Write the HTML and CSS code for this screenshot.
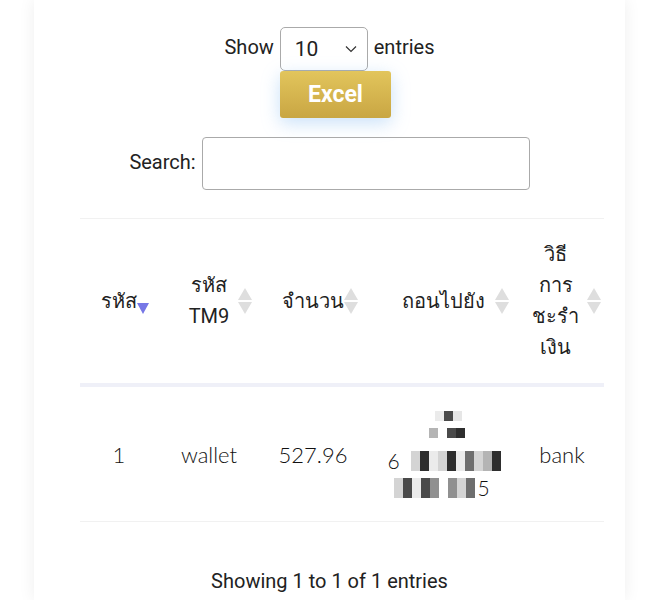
FILE: index.html
```html
<!DOCTYPE html>
<html lang="th">

<head>
    <meta charset="utf-8">
    <meta name="viewport" content="width=device-width, initial-scale=1.0">
    <title>ประวัติการถอน</title>

    <link rel="stylesheet" href="styles.css">
</head>

<body>

    <main class="card">
        <div class="dt-length">
            <label>Show
                <span class="select">10
                    <svg class="chev" width="12" height="8" viewBox="0 0 12 8"><path d="M1 1.5 L6 6.5 L11 1.5" fill="none" stroke="#333" stroke-width="1.2"/></svg>
                </span>
                entries</label>
        </div>
        <div class="dt-buttons">
            <button class="btn-excel">Excel</button>
        </div>
        <div class="dt-search">
            <label>Search: <span class="search-box"></span></label>
        </div>

        <div class="table-wrap">
            <table class="withdraw">
                <thead>
                    <tr>
                        <th class="c1"><span class="th-in">รหัส<i class="sort sort-desc"></i></span></th>
                        <th class="c2"><span class="th-in">รหัส<br>TM9<i class="sort gap9"></i></span></th>
                        <th class="c3"><span class="th-in">จำนวน<i class="sort"></i></span></th>
                        <th class="c4"><span class="th-in">ถอนไปยัง<i class="sort gap10"></i></span></th>
                        <th class="c5"><span class="th-in">วิธี<br>การ<br>ชะรำ<br>เงิน<i class="sort gap8"></i></span></th>
                    </tr>
                </thead>
                <tbody>
                    <tr>
                        <td>1</td>
                        <td>wallet</td>
                        <td>527.96</td>
                        <td class="masked">
                            <div class="mosaic">
                                <div class="mrow r1"><b class="g1"></b><b class="g6"></b><b class="g8"></b></div>
                                <div class="mrow r2"><b class="g3"></b><b class="g0"></b><b class="g6"></b><b class="g7"></b></div>
                                <div class="mrow r3"><span class="ch">6</span><b class="g0"></b><b class="g2"></b><b class="g7"></b><b class="g1"></b><b class="g2"></b><b class="g7"></b><b class="g1"></b><b class="g5"></b><b class="g2"></b><b class="g3"></b><b class="g7"></b></div>
                                <div class="mrow r4"><b class="g2"></b><b class="g6"></b><b class="g1"></b><b class="g6"></b><b class="g4"></b><b class="g0"></b><b class="g4"></b><b class="g2"></b><b class="g5"></b><span class="ch">5</span></div>
                            </div>
                        </td>
                        <td>bank</td>
                    </tr>
                </tbody>
            </table>
        </div>

        <p class="dt-info">Showing 1 to 1 of 1 entries</p>
    </main>

</body>

</html>
```

FILE: styles.css
```css
html {
    margin: 0;
}

body {
    margin: 0;
    background-color: #ffffff;
    font-family: Roboto, "Noto Sans", sans-serif;
    color: #222;
}

.card {
    margin: 0 34px;
    padding-top: 27px;
    height: 600px;
    box-sizing: border-box;
    background-color: #fff;
    box-shadow: 0 0 16px rgba(0, 0, 0, 0.07);
}

.dt-length {
    text-align: center;
    font-size: 20px;
}

.select {
    display: inline-flex;
    align-items: center;
    justify-content: space-between;
    box-sizing: border-box;
    width: 88px;
    height: 44px;
    padding: 0 10px 0 14px;
    margin: 0 1px;
    border: 1px solid #aaa;
    border-radius: 5px;
    font-size: 21px;
    vertical-align: middle;
}

.dt-buttons {
    padding-left: 246px;
}

.btn-excel {
    width: 111px;
    height: 47px;
    border: none;
    border-radius: 3px;
    background: linear-gradient(#e2c55c, #c9a643);
    color: #fff;
    font-family: Roboto, sans-serif;
    font-weight: bold;
    font-size: 23px;
    box-shadow: 0 5px 18px rgba(120, 180, 240, 0.4);
}

.dt-search {
    margin-top: 19px;
    text-align: center;
    font-size: 20px;
}

.search-box {
    display: inline-block;
    box-sizing: border-box;
    width: 328px;
    height: 53px;
    margin-left: 1px;
    border: 1px solid #aaa;
    border-radius: 4px;
    vertical-align: middle;
}

.table-wrap {
    margin: 28px 21px 0 46px;
    overflow: hidden;
}

.withdraw {
    width: 524px;
    border-collapse: collapse;
    border-top: 1px solid #f1f1f1;
    font-family: Lato, "Noto Sans", sans-serif;
}

.withdraw th {
    height: 164px;
    padding: 0;
    border-bottom: 4px solid #eff0f8;
    font-family: Roboto, "Noto Sans", sans-serif;
    font-weight: 400;
    font-size: 20px;
    line-height: 31px;
    color: #222;
}

.th-in {
    position: relative;
    display: inline-block;
}

.c1 { width: 78px; }
.c2 { width: 102px; }
.c3 { width: 106px; }
.c4 { width: 154px; }

.withdraw th.c5 {
    padding-right: 13px;
}

.sort {
    position: absolute;
    left: 100%;
    top: 50%;
    width: 14px;
    height: 28px;
    margin-top: -14px;
}

.gap8 { margin-left: 8px; }
.gap9 { margin-left: 9px; }
.gap10 { margin-left: 10px; }

.sort::before,
.sort::after {
    content: "";
    position: absolute;
    left: 0;
    border-left: 7px solid transparent;
    border-right: 7px solid transparent;
}

.sort::before {
    top: 1px;
    border-bottom: 12px solid #dedede;
}

.sort::after {
    bottom: 1px;
    border-top: 12px solid #dedede;
}

.sort-desc {
    margin-top: -6px;
    width: 12px;
}

.sort-desc::before {
    display: none;
}

.sort-desc::after {
    bottom: auto;
    top: 8px;
    border-left-width: 6px;
    border-right-width: 6px;
    border-top: 11px solid #7677e6;
}

.withdraw td {
    height: 134px;
    padding: 0;
    border-bottom: 1px solid #f1f1f1;
    text-align: center;
    font-size: 22px;
    font-weight: 300;
    color: #111;
}

.mosaic {
    display: flex;
    flex-direction: column;
    align-items: center;
    gap: 3px;
}

.mrow {
    display: flex;
    align-items: center;
    height: 24px;
}

.mrow b {
    display: block;
    width: 9px;
    height: 20px;
}

.r1 b, .r2 b {
    height: 10px;
}

.r1 { height: 14px; padding-left: 10px; }
.r2 { height: 14px; padding-left: 8px; }
.r3 { margin-top: 6px; }

.ch {
    font-size: 21px;
    font-weight: 300;
    margin: 0 2px;
}

.g0 { background: #ffffff; }
.g1 { background: #ebebeb; }
.g2 { background: #d4d4d4; }
.g3 { background: #b4b4b4; }
.g4 { background: #909090; }
.g5 { background: #6e6e6e; }
.g6 { background: #4a4a4a; }
.g7 { background: #2e2e2e; }
.g8 { background: #e6e6e6; }

.dt-info {
    margin: 47px 0 0;
    text-align: center;
    font-size: 20px;
}
```
